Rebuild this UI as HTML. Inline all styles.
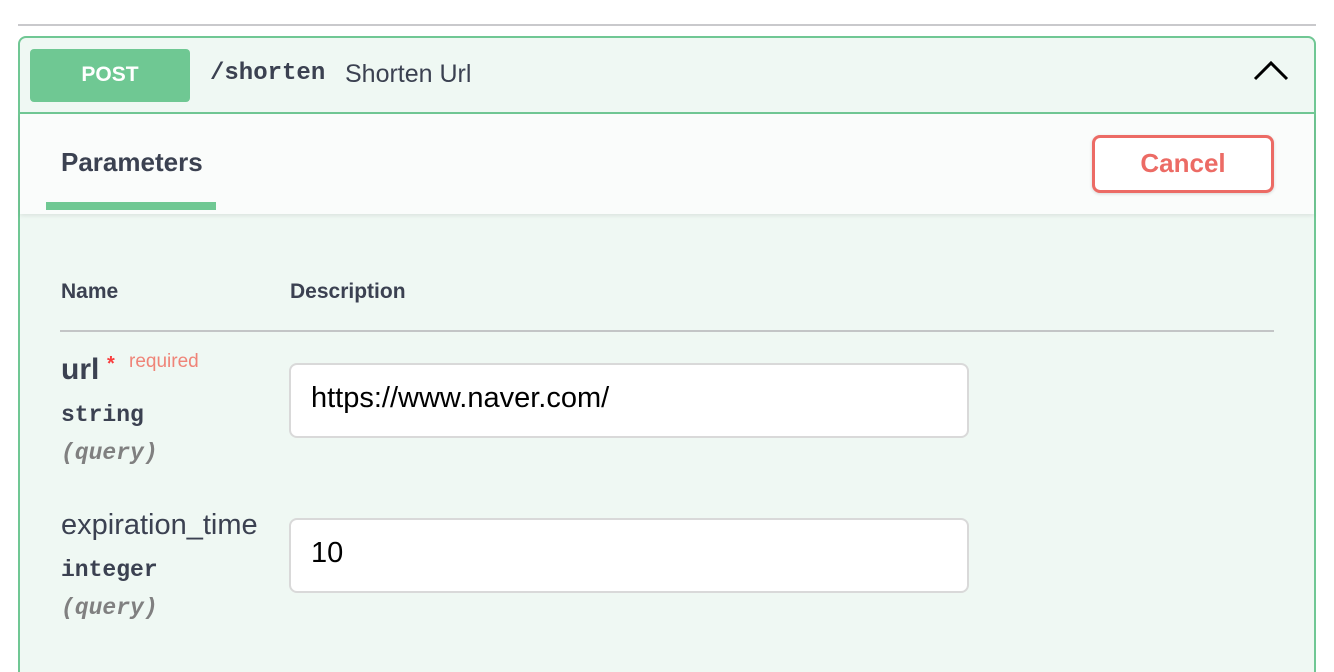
<!DOCTYPE html>
<html style="overflow:hidden;height:672px"><head><style>
body{margin:0;width:1334px;height:672px;background:#fff;position:relative;overflow:hidden;font-family:"Liberation Sans","Noto Sans CJK KR",sans-serif;color:#3b4151}
.a{position:absolute}
.mono{font-family:"Liberation Mono","DejaVu Sans Mono",monospace;font-weight:bold}
</style></head><body>
<div class="a" style="left:18px;top:24px;width:1298px;height:2px;background:#c9c9cc"></div>
<div class="a" style="left:18px;top:36px;width:1294px;height:640px;border:2px solid #70c794;border-radius:8px;background:#eff8f3"></div>
<div class="a" style="left:20px;top:112px;width:1294px;height:2px;background:#70c794"></div>
<div class="a" style="left:30px;top:49px;width:160px;height:53px;background:#6fc893;border-radius:4px;color:#fff;font-weight:bold;font-size:21px;text-align:center;line-height:51px">POST</div>
<div class="a mono" style="left:210px;top:60px;font-size:24px">/shorten</div>
<div class="a" style="left:345px;top:60px;font-size:25px">Shorten Url</div>
<svg class="a" style="left:1252px;top:58px" width="38" height="24" viewBox="0 0 38 24"><path d="M3 21 L19 5 L35 21" fill="none" stroke="#000" stroke-width="3"/></svg>
<div class="a" style="left:20px;top:114px;width:1294px;height:100px;background:#fafcfb;box-shadow:0 2px 4px rgba(0,0,0,.08)"></div>
<div class="a" style="left:61px;top:147px;font-size:26px;font-weight:bold">Parameters</div>
<div class="a" style="left:46px;top:202px;width:170px;height:8px;background:#6fc893"></div>
<div class="a" style="left:1092px;top:135px;width:176px;height:52px;border:3px solid #ec6b65;border-radius:8px;background:#fff;color:#ec6b65;font-weight:bold;font-size:26px;text-align:center;line-height:50px;box-shadow:0 1px 3px rgba(0,0,0,.15)">Cancel</div>
<div class="a" style="left:61px;top:280px;font-size:21px;font-weight:bold">Name</div>
<div class="a" style="left:290px;top:280px;font-size:21px;font-weight:bold">Description</div>
<div class="a" style="left:60px;top:330px;width:1214px;height:2px;background:#c3c5c6"></div>
<div class="a" style="left:61px;top:353px;font-size:30px;font-weight:bold">url</div>
<div class="a" style="left:107px;top:353px;font-size:20px;color:#f93e3e;font-weight:bold">*</div>
<div class="a" style="left:129px;top:351px;font-size:19px;color:#ef8478">required</div>
<div class="a mono" style="left:61px;top:402px;font-size:23px">string</div>
<div class="a mono" style="left:61px;top:440px;font-size:23px;font-style:italic;color:#808080">(query)</div>
<div class="a" style="left:289px;top:363px;width:676px;height:71px;border:2px solid #d9d9d9;border-radius:8px;background:#fff"></div>
<div class="a" style="left:311px;top:382px;font-size:29px;color:#000">https://www.naver.com/</div>
<div class="a" style="left:61px;top:509px;font-size:29px">expiration_time</div>
<div class="a mono" style="left:61px;top:557px;font-size:23px">integer</div>
<div class="a mono" style="left:61px;top:595px;font-size:23px;font-style:italic;color:#808080">(query)</div>
<div class="a" style="left:289px;top:518px;width:676px;height:71px;border:2px solid #d9d9d9;border-radius:8px;background:#fff"></div>
<div class="a" style="left:311px;top:537px;font-size:29px;color:#000">10</div>
</body></html>
